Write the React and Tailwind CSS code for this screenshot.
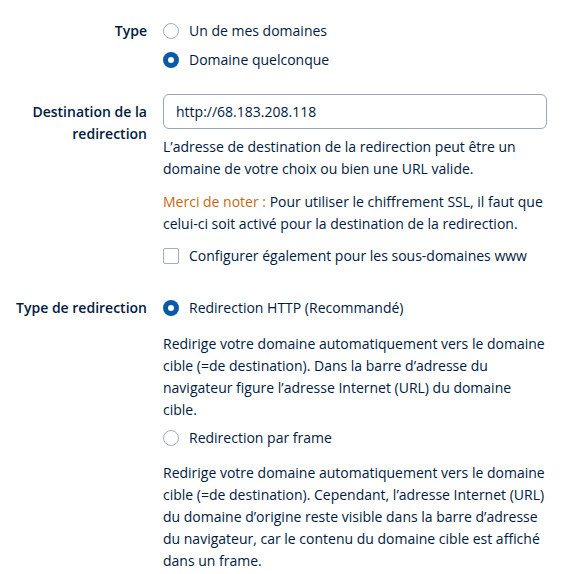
import { useState } from 'react'

function Radio({ checked, onChange, children }) {
  return (
    <label className="flex h-[22px] cursor-pointer items-center gap-[10px]" onClick={onChange}>
      <span
        className={
          checked
            ? 'flex h-4 w-4 shrink-0 items-center justify-center rounded-full bg-[#0b5aa8]'
            : 'flex h-4 w-4 shrink-0 items-center justify-center rounded-full border border-[#a4adbb] bg-white'
        }
      >
        {checked && <span className="h-[6px] w-[6px] rounded-full bg-white" />}
      </span>
      <span>{children}</span>
    </label>
  )
}

function Row({ label, children, className = '', labelClass = '' }) {
  return (
    <div className={`flex gap-4 ${className}`}>
      <div className={`w-[147px] shrink-0 text-right font-semibold ${labelClass}`}>{label}</div>
      <div className="w-[384px]">{children}</div>
    </div>
  )
}

export default function App() {
  const [type, setType] = useState('any')
  const [mode, setMode] = useState('http')
  const [www, setWww] = useState(false)
  const [url, setUrl] = useState('http://68.183.208.118')

  return (
    <div
      className="min-h-[574px] bg-white pt-5 text-[14px] leading-[22px] text-[#001b41]"
      style={{ fontFamily: '"Open Sans", "Noto Sans", sans-serif' }}
    >
      <Row label="Type">
        <div className="flex flex-col gap-[7px]">
          <Radio checked={type === 'mine'} onChange={() => setType('mine')}>
            Un de mes domaines
          </Radio>
          <Radio checked={type === 'any'} onChange={() => setType('any')}>
            Domaine quelconque
          </Radio>
        </div>
      </Row>

      <Row label={<>Destination de la<br />redirection</>} className="mt-[23px]" labelClass="pt-[7px]">
        <input
          value={url}
          onChange={(e) => setUrl(e.target.value)}
          className="block h-[35px] w-full rounded-[6px] border border-[#9ba6b6] px-3 text-[#001b41] outline-none"
        />
        <p className="mt-[7px]">
          L’adresse de destination de la redirection peut être un domaine de votre choix ou bien une URL valide.
        </p>
        <p className="mt-[11px]">
          <span className="text-[#c7680f]">Merci de noter :</span> Pour utiliser le chiffrement SSL, il faut que
          celui-ci soit activé pour la destination de la redirection.
        </p>
        <label className="mt-[10px] flex h-[22px] cursor-pointer items-center gap-[10px]" onClick={() => setWww(!www)}>
          <span className="flex h-4 w-4 shrink-0 items-center justify-center rounded-[2px] border border-[#a4adbb] bg-white">
            {www && (
              <svg viewBox="0 0 16 16" className="h-3 w-3" fill="none" stroke="#0b5aa8" strokeWidth="2.2">
                <path d="M3 8.5l3 3 7-7" />
              </svg>
            )}
          </span>
          <span>Configurer également pour les sous-domaines www</span>
        </label>
      </Row>

      <Row label="Type de redirection" className="mt-[30px]">
        <Radio checked={mode === 'http'} onChange={() => setMode('http')}>
          Redirection HTTP (Recommandé)
        </Radio>
        <p className="mt-[14px]">
          Redirige votre domaine automatiquement vers le domaine cible (=de destination). Dans la barre d’adresse du
          navigateur figure l’adresse Internet (URL) du domaine cible.
        </p>
        <div className="mt-[6px]">
          <Radio checked={mode === 'frame'} onChange={() => setMode('frame')}>
            Redirection par frame
          </Radio>
        </div>
        <p className="mt-[13px]">
          Redirige votre domaine automatiquement vers le domaine cible (=de destination). Cependant, l’adresse
          Internet (URL) du domaine d’origine reste visible dans la barre d’adresse du navigateur, car le contenu du
          domaine cible est affiché dans un frame.
        </p>
      </Row>
    </div>
  )
}
